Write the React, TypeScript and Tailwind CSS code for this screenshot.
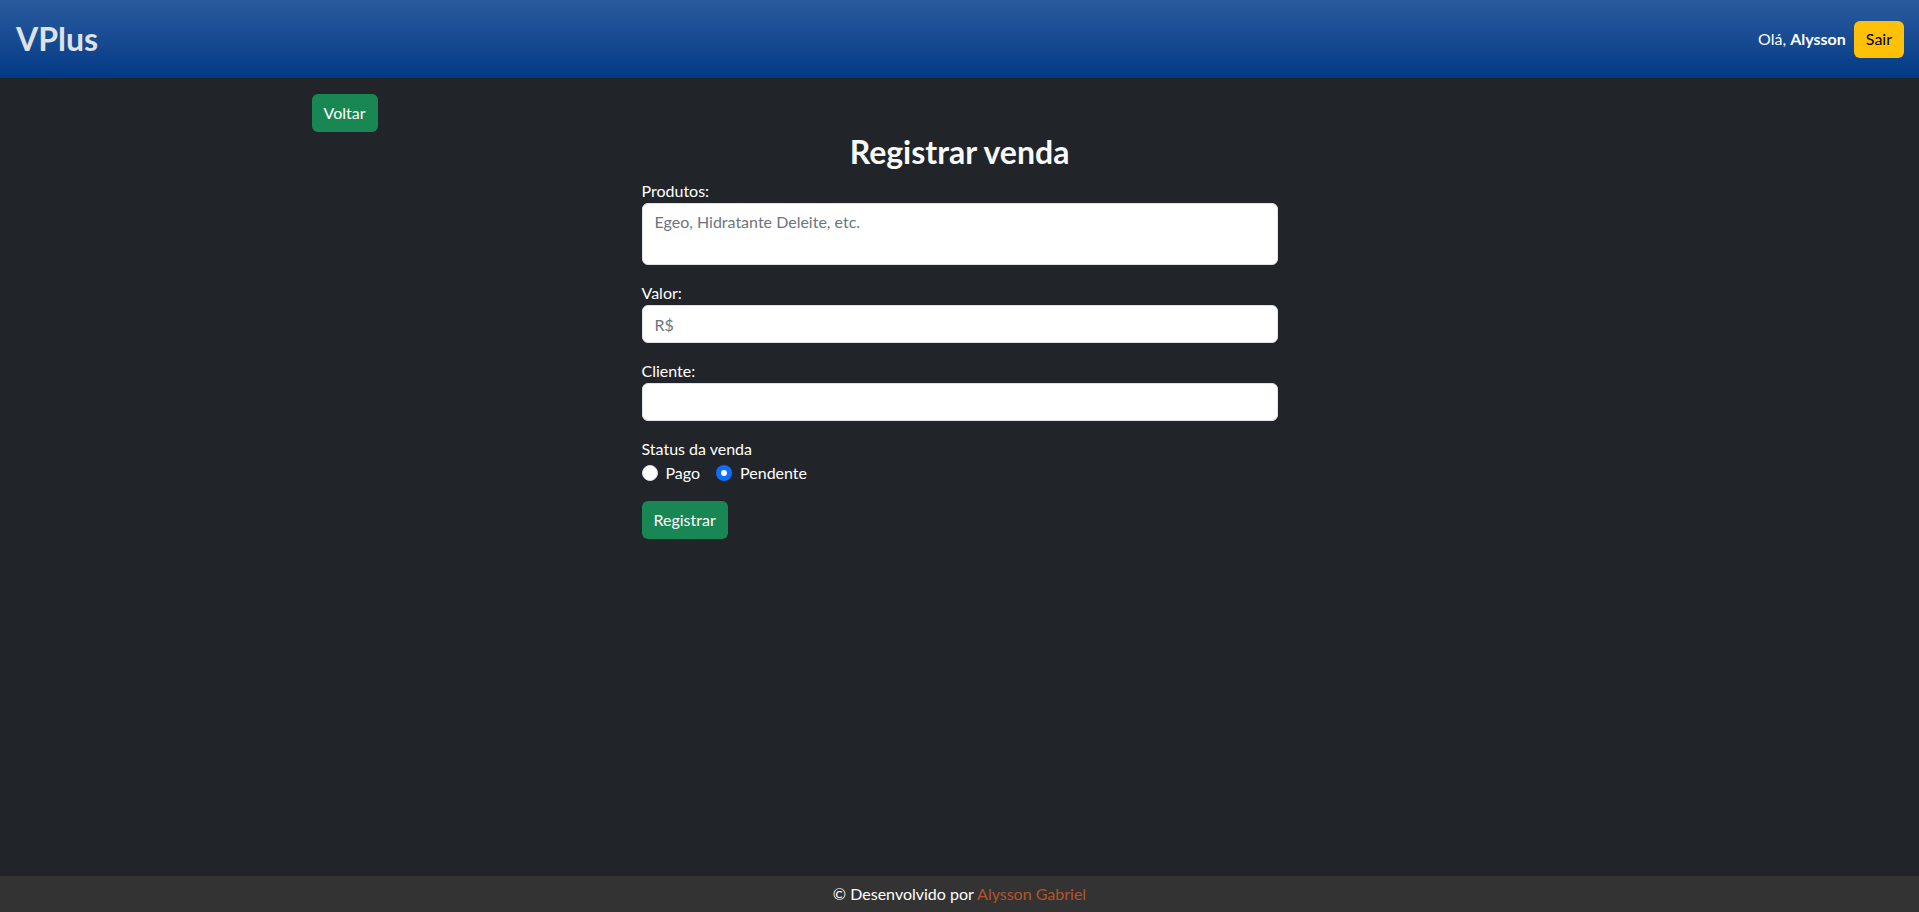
import React from "react";

export default function App() {
  return (
    <div className="min-h-screen flex flex-col bg-[#212529] font-['Lato',sans-serif] text-base leading-6 text-white">
      <header className="h-[78px] bg-linear-to-b from-[#2a5b9e] to-[#013a86] flex items-center justify-between pl-4 pr-[15px]">
        <span className="text-[32px] font-bold leading-none text-[#dee2e6]">VPlus</span>
        <div className="flex items-center gap-2">
          <span className="text-white">
            Olá, <b className="font-bold">Alysson</b>
          </span>
          <button className="h-[37px] px-3 rounded-md bg-[#ffc107] text-[#000] font-normal">Sair</button>
        </div>
      </header>

      <main className="flex-1">
        <div className="mx-auto w-[1320px] px-3 pt-4">
          <button className="h-[38px] px-3 rounded-md bg-[#198754] text-white">Voltar</button>
          <div className="mx-auto w-[636px]">
            <h2 className="mt-px text-center text-[32px] font-bold leading-[1.2] mb-2 text-[#f8f9fa]">
              Registrar venda
            </h2>
            <div className="mb-4">
              <label className="block">Produtos:</label>
              <textarea
                rows={2}
                placeholder="Egeo, Hidratante Deleite, etc."
                className="block w-full h-[62px] resize-none rounded-md border border-[#dee2e6] bg-white px-3 py-1.5 text-[#212529] placeholder:text-[#6c757d] outline-none"
              />
            </div>
            <div className="mb-4">
              <label className="block">Valor:</label>
              <input
                placeholder="R$"
                className="block w-full h-[38px] rounded-md border border-[#dee2e6] bg-white px-3 text-[#212529] placeholder:text-[#6c757d] outline-none"
              />
            </div>
            <div className="mb-4">
              <label className="block">Cliente:</label>
              <input className="block w-full h-[38px] rounded-md border border-[#dee2e6] bg-white px-3 text-[#212529] outline-none" />
            </div>
            <div className="mb-4">
              <div>Status da venda</div>
              <div className="flex items-center h-6 mb-[6px]">
                <span className="w-4 h-4 rounded-full bg-white border border-[#dee2e6]" />
                <span className="ml-2">Pago</span>
                <span className="ml-4 w-4 h-4 rounded-full bg-[#0d6efd] flex items-center justify-center">
                  <span className="w-1.5 h-1.5 rounded-full bg-white" />
                </span>
                <span className="ml-2">Pendente</span>
              </div>
            </div>
            <button className="h-[38px] px-3 rounded-md bg-[#198754] text-white">Registrar</button>
          </div>
        </div>
      </main>

      <footer className="h-9 bg-[#333333] flex items-center justify-center text-white">
        <span>
          © Desenvolvido por <span className="text-[#b4532a]">Alysson Gabriel</span>
        </span>
      </footer>
    </div>
  );
}
